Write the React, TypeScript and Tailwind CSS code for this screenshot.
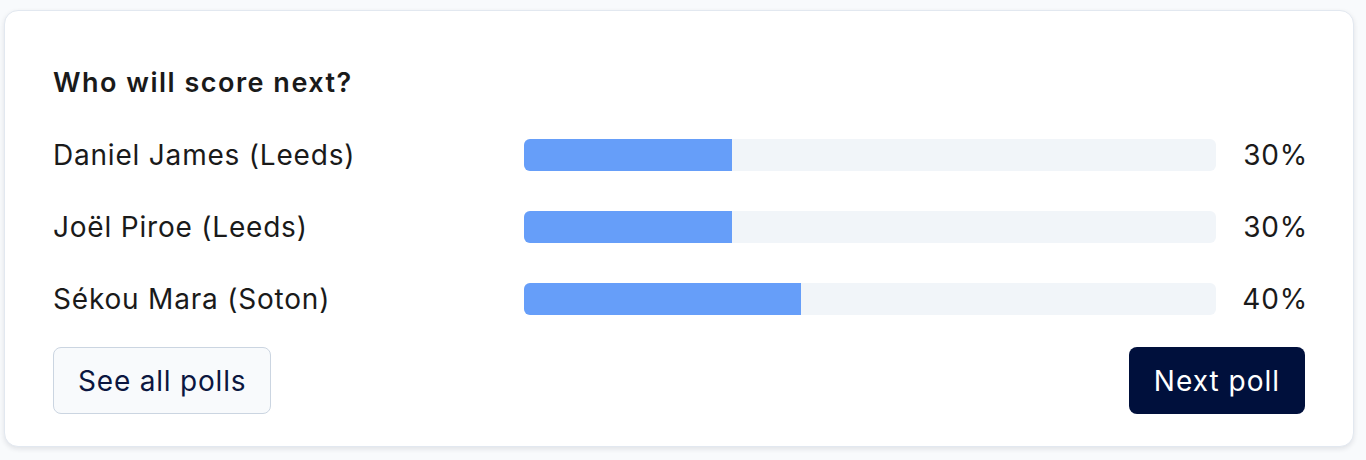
import React from 'react'

type Option = { name: string; pct: number }

const options: Option[] = [
  { name: 'Daniel James (Leeds)', pct: 30 },
  { name: 'Joël Piroe (Leeds)', pct: 30 },
  { name: 'Sékou Mara (Soton)', pct: 40 },
]

function PollRow({ option }: { option: Option }) {
  return (
    <div className="flex items-center h-[40px]">
      <div className="w-[471px] shrink-0 text-[28px] tracking-[0.8px] leading-none text-[#1a1a1a]">{option.name}</div>
      <div className="flex-1 h-[32px] rounded-[6px] bg-[#f1f5f9] overflow-hidden">
        <div className="h-full bg-[#669ef9]" style={{ width: `${option.pct}%` }} />
      </div>
      <div className="w-[92px] -mr-[3px] shrink-0 text-right text-[28px] tracking-[0.8px] leading-none text-[#1a1a1a]">{option.pct}%</div>
    </div>
  )
}

export default function App() {
  return (
    <div className="min-h-[460px] bg-[#f8fafc] pt-[10px] pl-[4px] pr-[12px]" style={{ fontFamily: 'Inter, "Noto Sans", sans-serif' }}>
      <div className="bg-white border border-[#e2e8f0] rounded-[14px] shadow-[0_2px_5px_rgba(15,23,42,0.1)] px-[48px] pt-[56px] pb-[32px]">
        <h2 className="text-[27px] tracking-[1.5px] leading-[32px] font-semibold text-[#1a1a1a]">Who will score next?</h2>
        <div className="mt-[36px] flex flex-col gap-[32px]">
          {options.map(o => (
            <PollRow key={o.name} option={o} />
          ))}
        </div>
        <div className="mt-[28px] flex items-center justify-between">
          <button className="h-[67px] px-[24px] rounded-[8px] border border-[#cbd5e1] bg-[#f8fafc] text-[28px] tracking-[0.8px] text-[#0b1640]">
            See all polls
          </button>
          <button className="h-[67px] px-[25px] rounded-[8px] bg-[#00103c] text-[28px] tracking-[1px] text-white">
            Next poll
          </button>
        </div>
      </div>
    </div>
  )
}
